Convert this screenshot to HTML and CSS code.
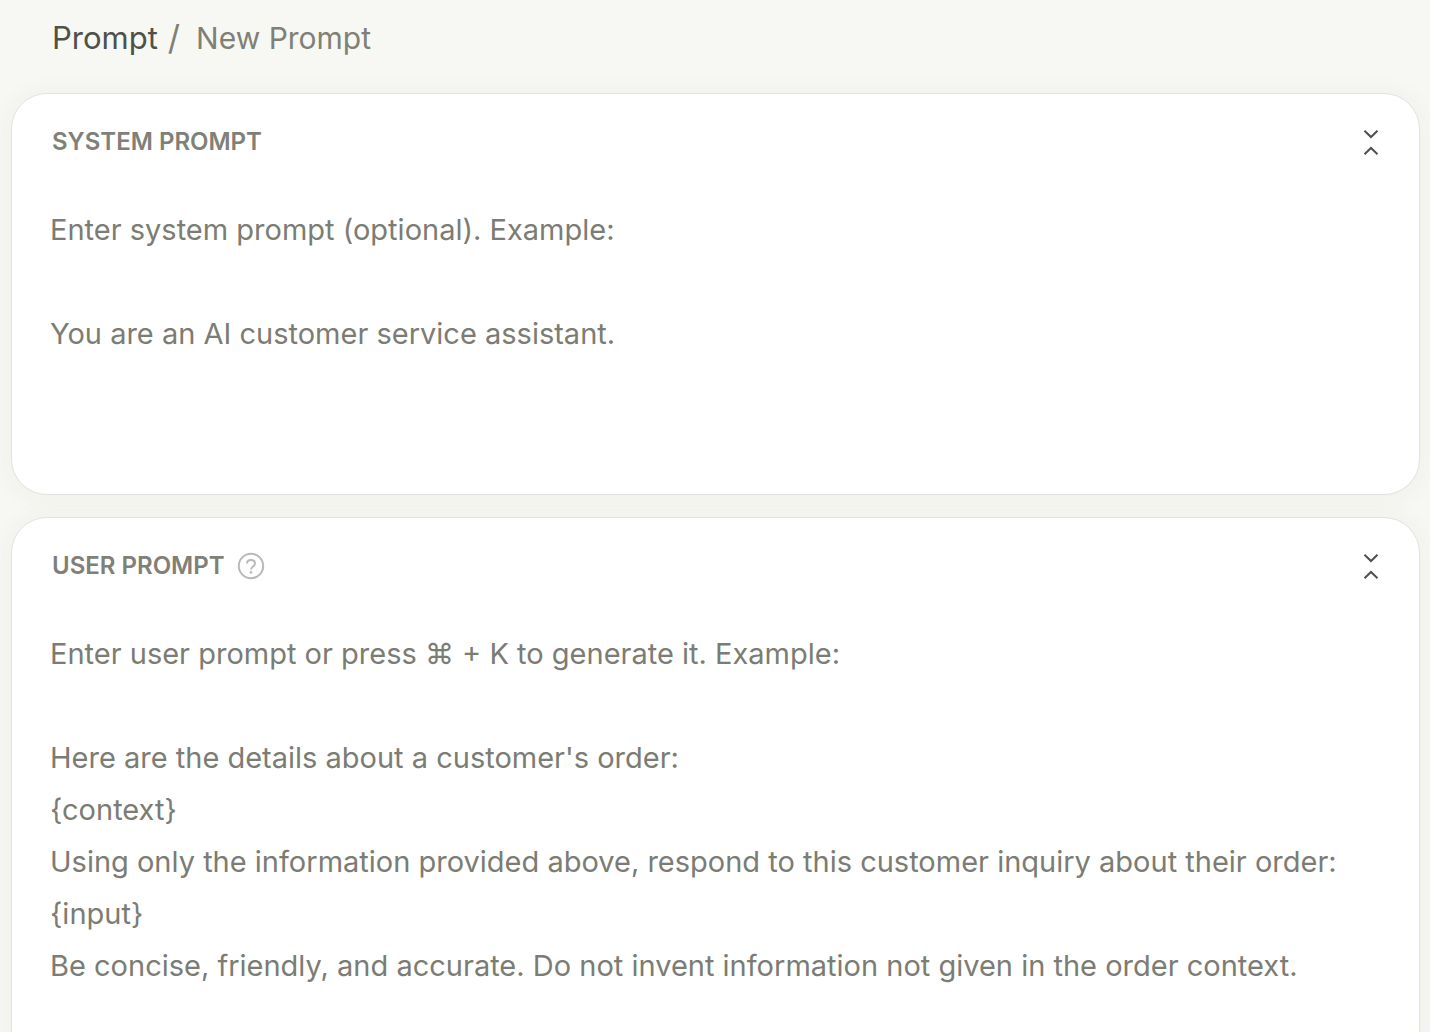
FILE: index.html
```html
<!DOCTYPE html>
<html lang="en">
<head>
<meta charset="utf-8">
<title>New Prompt</title>
<link rel="stylesheet" href="styles.css">
</head>
<body>
<nav class="breadcrumb" aria-label="Breadcrumb">
  <a class="crumb-link" href="#">Prompt</a>
  <span class="crumb-separator">/</span>
  <span class="crumb-current">New Prompt</span>
</nav>
<main class="panels">
  <section class="panel">
    <header class="panel-header">
      <label class="panel-title" for="system-prompt">SYSTEM PROMPT</label>
      <button class="icon-button collapse" type="button" aria-label="Collapse system prompt">
        <svg width="16" height="28" viewBox="0 0 16 28"><path d="M1.5 2.8L8 9l6.500-6.200M1.500 26.200L8 20l6.500 6.200"/></svg>
      </button>
    </header>
    <textarea class="prompt-input" id="system-prompt" rows="5" placeholder="Enter system prompt (optional). Example:

You are an AI customer service assistant."></textarea>
  </section>
  <section class="panel">
    <header class="panel-header">
      <label class="panel-title" for="user-prompt">USER PROMPT</label>
      <button class="icon-button help" type="button" aria-label="About user prompts">
        <svg width="28" height="28" viewBox="0 0 28 28"><circle cx="14" cy="14" r="12.200"/><path d="M10 11.600c0-2.200 1.700-3.600 4-3.600s4 1.400 4 3.500c0 3-4 2.900-4 6.100"/><circle class="dot" cx="14" cy="20.400" r="1.400"/></svg>
      </button>
      <button class="icon-button collapse" type="button" aria-label="Collapse user prompt">
        <svg width="16" height="28" viewBox="0 0 16 28"><path d="M1.500 2.800L8 9l6.500-6.200M1.500 26.200L8 20l6.500 6.200"/></svg>
      </button>
    </header>
    <textarea class="prompt-input" id="user-prompt" rows="9" placeholder="Enter user prompt or press ⌘ + K to generate it. Example:

Here are the details about a customer's order:
{context}
Using only the information provided above, respond to this customer inquiry about their order:
{input}
Be concise, friendly, and accurate. Do not invent information not given in the order context."></textarea>
  </section>
</main>
</body>
</html>
```
FILE: styles.css
```css
* { box-sizing: border-box; }
body { margin: 0; background: #f7f8f3; color: #7f8077; font-family: Inter, "Liberation Sans", sans-serif; }
.breadcrumb { display: flex; align-items: center; gap: 10px; padding: 18px 52px; font-size: 30px; line-height: 40px; }
.crumb-link { color: #4f504a; font-size: 31px; text-decoration: none; }
.crumb-separator { font-size: 34px; }
.crumb-current { padding-left: 6px; }
.panels { display: grid; gap: 22px; padding: 17px 10px 22px 11px; }
.panel { padding: 28px 40px 30px 38px; background: #fff; border: 1px solid #e2e3de; border-radius: 36px; box-shadow: 0 2px 28px rgba(60, 64, 40, 0.05); }
.panel-header { display: flex; align-items: center; gap: 12px; height: 40px; padding-left: 2px; }
.panel-title { font-size: 24px; line-height: 32px; font-weight: 600; }
.icon-button { display: flex; padding: 0; border: 0; background: none; }
.icon-button svg { fill: none; stroke: currentColor; stroke-width: 2; }
.collapse { margin-left: auto; color: #4f504a; }
.help { color: #b9b9b7; }
.help .dot { fill: currentColor; stroke: none; }
.prompt-input { display: block; width: 100%; margin-top: 42px; padding: 0; border: 0; outline: 0; resize: none; overflow: hidden; background: none; font: 400 29px/52px Inter, "Liberation Sans", sans-serif; }
.prompt-input::placeholder { color: #7b7c73; opacity: 1; }
```
